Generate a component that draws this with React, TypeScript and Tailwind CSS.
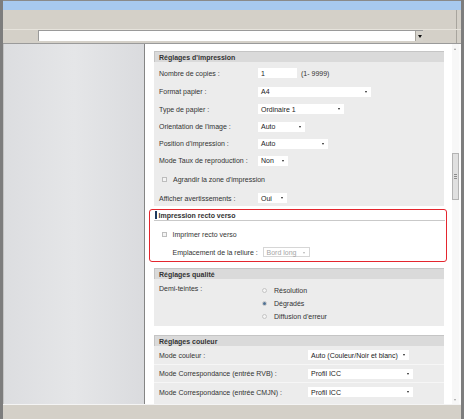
import React from 'react';

// petit menu déroulant façon formulaire d'imprimante
const Select: React.FC<{ w: number; text: string; disabled?: boolean }> = ({ w, text, disabled }) => (
  <div
    className={`relative h-[10px] flex items-center pl-[3px] ${
      disabled ? 'bg-white border border-[#d6d6d6] text-[#a5a5a5]' : 'bg-white text-[#222]'
    }`}
    style={{ width: w }}
  >
    <span className="leading-none">{text}</span>
    <span
      className={`absolute right-[4px] top-[4px] w-0 h-0 border-l-[1.5px] border-r-[1.5px] border-t-[2px] border-l-transparent border-r-transparent ${
        disabled ? 'border-t-[#b5b5b5]' : 'border-t-[#222]'
      }`}
    />
  </div>
);

const Checkbox = () => (
  <span className="inline-block w-[5px] h-[5px] border border-[#bdbdbd] bg-[#f4f4f4]" />
);

const Radio: React.FC<{ checked?: boolean }> = ({ checked }) => (
  <span className="w-[5px] h-[5px] rounded-full border border-[#c4c4c4] bg-[#f4f4f4] flex items-center justify-center">
    {checked && <span className="w-[3px] h-[3px] rounded-full bg-[#4d6f92]" />}
  </span>
);

const Header: React.FC<{ title: string }> = ({ title }) => (
  <div className="h-[11px] flex items-center pl-[4px] bg-[#dadada] border-t border-l border-[#c5c5c5] font-bold text-[#333]">
    {title}
  </div>
);

const Row: React.FC<{ h: number; label: string; lw?: number; children?: React.ReactNode }> = ({ h, label, lw = 104, children }) => (
  <div className="flex items-center" style={{ height: h }}>
    <div className="pl-[5px] shrink-0" style={{ width: lw }}>{label}</div>
    {children}
  </div>
);

export default function App() {
  return (
    <div className="w-[464px] h-[419px] overflow-hidden flex flex-col bg-[#d4d0c8] border-l-[3px] border-r-[3px] border-[#7d7d7d] font-['Liberation_Sans',Arial,sans-serif] text-[7px] leading-none text-[#333]">
      {/* barre de titre */}
      <div className="h-px bg-[#8a8a8a] shrink-0" />
      <div className="h-[9px] bg-[#a7c9ef] shrink-0" />

      {/* barre d'outils */}
      <div className="h-[19px] shrink-0 flex">
        <div className="w-[454px] border-r border-[#a8a59e]" />
      </div>
      <div className="h-[14px] shrink-0 flex border-t border-[#e6e3dc]">
        <div className="w-[454px] border-r border-[#a8a59e]">
          <div className="ml-[35px] w-[385px] h-[11px] bg-white border-t border-l border-[#9a9a9a] flex justify-end">
            <div className="w-[8px] h-full bg-[#d6d3cc] border-l border-[#a8a59e] flex items-center justify-center">
              <span className="w-0 h-0 border-l-[2px] border-r-[2px] border-t-[3px] border-l-transparent border-r-transparent border-t-[#111]" />
            </div>
          </div>
        </div>
      </div>

      {/* zone principale */}
      <div className="flex-1 min-h-0 flex border-t border-[#9a9a9a]">
        <div className="w-[142px] shrink-0 border-l border-[#c4c4c4] border-r border-r-[#858585] bg-linear-to-r from-[#dcdde0] via-[#e5e6e8] to-[#dadbde]" />

        <div className="flex-1 flex bg-white">
          <div className="w-[307px] shrink-0 overflow-hidden pl-[9px] pt-[7px]">
            {/* Réglages d'impression */}
            <div className="w-[290px]">
              <Header title="Réglages d'impression" />
              <div className="bg-[#ececec] pt-px">
                <Row h={20} label="Nombre de copies :">
                  <div className="w-[39px] h-[10px] bg-white pl-[3px] flex items-center text-[#222]">1</div>
                  <span className="ml-[4px]">(1- 9999)</span>
                </Row>
                <Row h={17} label="Format papier :"><Select w={113} text="A4" /></Row>
                <Row h={18} label="Type de papier :"><Select w={86} text="Ordinaire 1" /></Row>
                <Row h={17} label="Orientation de l'image :"><Select w={47} text="Auto" /></Row>
                <Row h={17} label="Position d'impression :"><Select w={70} text="Auto" /></Row>
                <Row h={17} label="Mode Taux de reproduction :"><Select w={30} text="Non" /></Row>
                <div className="h-[21px] flex items-center pl-[8px]">
                  <Checkbox />
                  <span className="ml-[6px]">Agrandir la zone d'impression</span>
                </div>
                <Row h={16} label="Afficher avertissements :"><Select w={29} text="Oui" /></Row>
              </div>
            </div>

            {/* Impression recto verso (encadré rouge) */}
            <div className="mt-[3px] ml-[-5px] w-[298px] border-[1.5px] border-[#e4262e] rounded-[3px] pl-[3.5px] pr-[1.5px] pb-[3px]">
              <div className="h-[11px] flex items-center border-b border-[#c9c9c9]">
                <span className="ml-px w-[2px] h-[8px] bg-[#1e3a5f]" />
                <span className="ml-[2px] font-bold text-[#333]">Impression recto verso</span>
              </div>
              <div className="h-[24px] mt-px flex items-center pl-[8px]">
                <Checkbox />
                <span className="ml-[6px]">Imprimer recto verso</span>
              </div>
              <div className="h-[12px] flex items-center">
                <div className="pl-[19px] w-[109px] shrink-0">Emplacement de la reliure :</div>
                <Select w={47} text="Bord long" disabled />
              </div>
            </div>

            {/* Réglages qualité */}
            <div className="w-[290px] mt-[6px]">
              <Header title="Réglages qualité" />
              <div className="bg-[#ececec] pt-[5px] pb-[3px] flex">
                <div className="w-[108px] pl-[5px] h-[9px] flex items-center shrink-0">Demi-teintes :</div>
                <div className="flex flex-col">
                  {[
                    ['Résolution', false],
                    ['Dégradés', true],
                    ["Diffusion d'erreur", false],
                  ].map(([t, c]) => (
                    <div key={t as string} className="h-[13px] flex items-center">
                      <Radio checked={c as boolean} />
                      <span className="ml-[7px]">{t as string}</span>
                    </div>
                  ))}
                </div>
              </div>
            </div>

            {/* Réglages couleur */}
            <div className="w-[290px] mt-[9px]">
              <Header title="Réglages couleur" />
              <div className="bg-[#ececec] pb-[4px]">
                <div className="border-b border-[#f6f6f6]">
                  <Row h={18} label="Mode couleur :" lw={154}><Select w={101} text="Auto (Couleur/Noir et blanc)" /></Row>
                </div>
                <div className="border-b border-[#f6f6f6]">
                  <Row h={17} label="Mode Correspondance (entrée RVB) :" lw={154}><Select w={105} text="Profil ICC" /></Row>
                </div>
                <Row h={18} label="Mode Correspondance (entrée CMJN) :" lw={154}><Select w={105} text="Profil ICC" /></Row>
              </div>
            </div>
          </div>

          {/* barre de défilement */}
          <div className="w-[7px] shrink-0 relative bg-[#f7f7f7]">
            <span className="absolute left-[2px] top-[4px] w-0 h-0 border-l-[1.5px] border-r-[1.5px] border-b-[2px] border-l-transparent border-r-transparent border-b-[#a0a0a0]" />
            <div className="absolute left-0 top-[109px] w-[7px] h-[47px] bg-[#e0e0e0] border border-[#b3b3b3] flex flex-col items-center justify-center gap-px">
              <span className="w-[3px] h-px bg-[#8c8c8c]" />
              <span className="w-[3px] h-px bg-[#8c8c8c]" />
              <span className="w-[3px] h-px bg-[#8c8c8c]" />
            </div>
            <span className="absolute left-[2px] bottom-[3px] w-0 h-0 border-l-[1.5px] border-r-[1.5px] border-t-[2px] border-l-transparent border-r-transparent border-t-[#a0a0a0]" />
          </div>
          <div className="flex-1 bg-[#fbfbfb]" />
        </div>
      </div>

      {/* barre d'état */}
      <div className="h-[15px] shrink-0 border-t border-[#f4f4f4]" />
    </div>
  );
}
